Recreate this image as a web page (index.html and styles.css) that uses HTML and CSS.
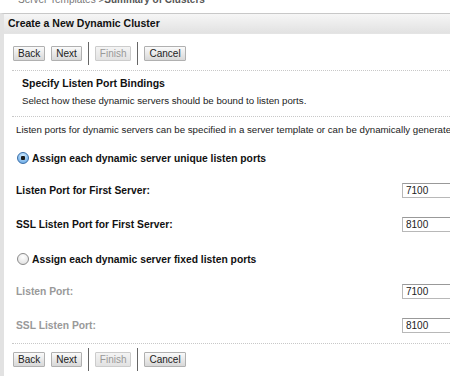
FILE: index.html
```html
<!DOCTYPE html>
<html lang="en">
<head>
    <meta charset="UTF-8">
    <title>Create a New Dynamic Cluster</title>
    <link rel="stylesheet" href="styles.css">
</head>
<body>

    <div class="crumb">Server Templates &gt;<b>Summary of Clusters</b></div>

    <div class="panel">
        <div class="panel-head">Create a New Dynamic Cluster</div>

        <div class="toolbar">
            <button class="btn">Back</button>
            <button class="btn">Next</button>
            <span class="sep"></span>
            <button class="btn" disabled>Finish</button>
            <span class="sep"></span>
            <button class="btn">Cancel</button>
        </div>

        <div class="step">
            <h2>Specify Listen Port Bindings</h2>
            <p>Select how these dynamic servers should be bound to listen ports.</p>
        </div>

        <p class="intro">Listen ports for dynamic servers can be specified in a server template or can be dynamically generated based on a listen port for the first server.</p>

        <!-- unique ports option -->
        <label class="choice">
            <input type="radio" name="ports" checked>
            <span class="dot"></span>
            Assign each dynamic server unique listen ports
        </label>
        <div class="field">
            <span class="field-label">Listen Port for First Server:</span>
            <input class="port" type="text" value="7100">
        </div>
        <div class="field">
            <span class="field-label">SSL Listen Port for First Server:</span>
            <input class="port" type="text" value="8100">
        </div>

        <!-- fixed ports option -->
        <label class="choice">
            <input type="radio" name="ports">
            <span class="dot"></span>
            Assign each dynamic server fixed listen ports
        </label>
        <div class="field off">
            <span class="field-label">Listen Port:</span>
            <input class="port" type="text" value="7100">
        </div>
        <div class="field off">
            <span class="field-label">SSL Listen Port:</span>
            <input class="port" type="text" value="8100">
        </div>

        <div class="toolbar bottom">
            <button class="btn">Back</button>
            <button class="btn">Next</button>
            <span class="sep"></span>
            <button class="btn" disabled>Finish</button>
            <span class="sep"></span>
            <button class="btn">Cancel</button>
        </div>
    </div>

</body>
</html>
```

FILE: styles.css
```css
body {
    font-family: 'Liberation Sans', Arial, sans-serif;
    font-size: 9.7px;
    margin: 0;
    background-color: #fff;
    color: #222;
    overflow: hidden;
    white-space: nowrap;
}
.crumb {
    height: 13px;
    line-height: 0;
    padding-left: 18px;
    color: #777;
    font-size: 10px;
}
.crumb b {
    color: #555;
}
.panel {
    border-left: 4px solid #e2e2e2;
    border-top: 1px solid #c8c8c8;
}
.panel-head {
    height: 19px;
    line-height: 19px;
    padding-left: 4px;
    font-weight: bold;
    font-size: 10.5px;
    color: #111;
    background: linear-gradient(#f6f6f6, #e2e2e2);
    border-bottom: 1px solid #e4e4e4;
}
.toolbar {
    display: flex;
    align-items: center;
    gap: 6px;
    margin-left: 8px;
    padding: 8px 0 5px 1px;
    border-bottom: 1px dotted #c8c8c8;
}
.toolbar.bottom {
    border-bottom: none;
    border-top: 1px dotted #c8c8c8;
    margin-top: 9px;
    padding-top: 4px;
}
.btn {
    font-family: 'Liberation Sans', Arial, sans-serif;
    font-size: 10px;
    height: 15px;
    padding: 0 4px;
    color: #222;
    background: linear-gradient(#fafafa, #d8d8d8);
    border: 1px solid #b0b0b0;
    border-radius: 1px;
    line-height: 13px;
}
.btn:disabled {
    color: #999;
    background: linear-gradient(#f4f4f4, #e2e2e2);
    border-color: #ccc;
}
.sep {
    width: 1px;
    height: 23px;
    background-color: #666;
}
.step {
    margin-left: 8px;
    padding: 6px 0 0 10px;
    border-bottom: 1px dotted #c8c8c8;
}
.step h2 {
    font-size: 10.5px;
    font-weight: bold;
    color: #111;
    margin: 0 0 6px;
}
.step p {
    margin: 0 0 10px;
}
.intro {
    margin: 7px 0 0 12px;
}
.choice {
    display: flex;
    align-items: center;
    gap: 3px;
    margin: 17px 0 0 13px;
    font-size: 10.3px;
    font-weight: bold;
    color: #111;
}
.choice input {
    display: none;
}
.dot {
    width: 10px;
    height: 10px;
    border-radius: 50%;
    border: 1px solid #8a8a8a;
    background: radial-gradient(circle at 50% 30%, #fff, #dcdcdc);
}
.choice input:checked + .dot {
    border-color: #3a6ea8;
    background: radial-gradient(circle, #1b1b1b 0 2px, transparent 2.5px),
                radial-gradient(circle at 50% 30%, #d2ecff, #5aa0e2);
}
.field {
    display: flex;
    align-items: center;
    justify-content: space-between;
    margin: 17px 0 0 12px;
    height: 17px;
}
.choice + .field {
    margin-top: 18px;
}
.field + .choice {
    margin-top: 20px;
}
.field-label {
    font-size: 10.3px;
    font-weight: bold;
    color: #111;
}
.field.off .field-label {
    color: #999;
}
.port {
    width: 50px;
    height: 13px;
    margin-right: -10px;
    padding: 0 3px;
    font-family: 'Liberation Sans', Arial, sans-serif;
    font-size: 10px;
    color: #222;
    border: 1px solid #b8b8b8;
    border-top-color: #999;
}
```
